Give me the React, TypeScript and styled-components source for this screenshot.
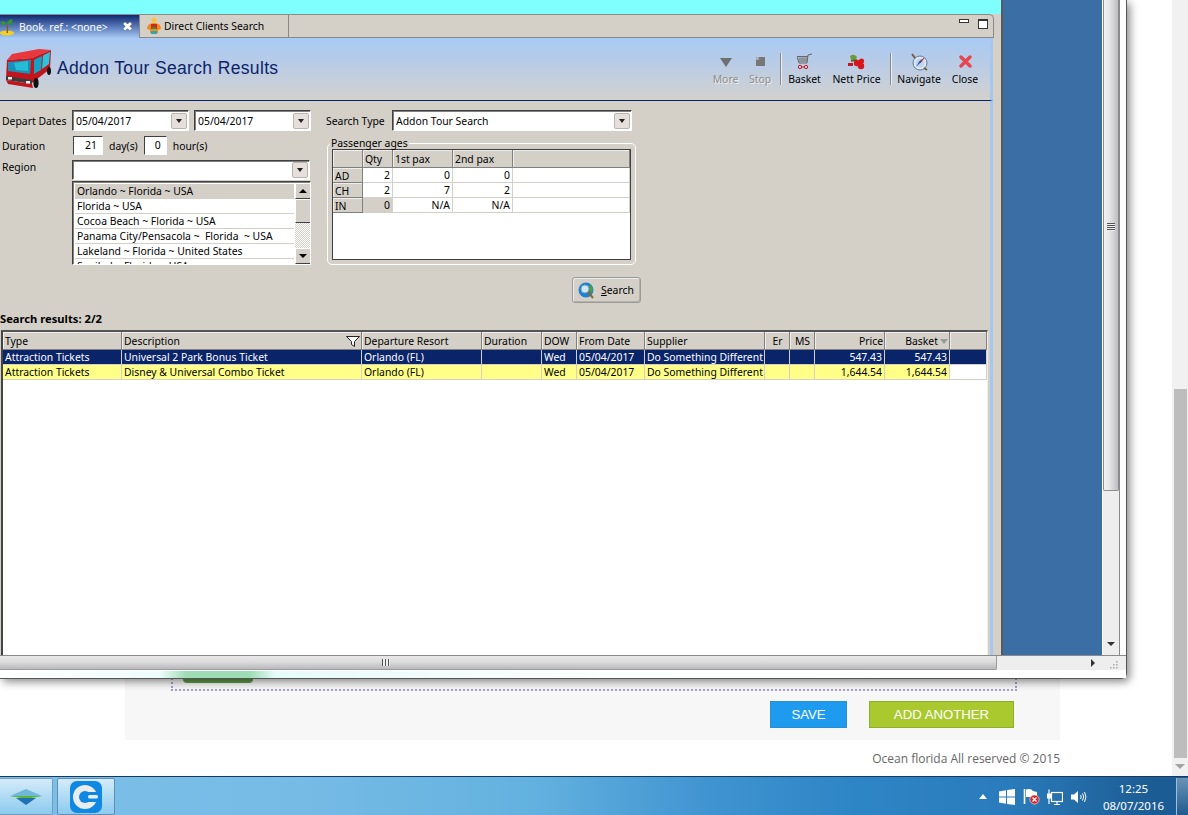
import React from "react";
import styled, { createGlobalStyle } from "styled-components";

const Global = createGlobalStyle`
  html, body { margin: 0; padding: 0; width: 1188px; height: 815px; overflow: hidden; background: #fff; }
  * { box-sizing: border-box; }
`;
const UI = `"Noto Sans", "DejaVu Sans", sans-serif`;
const FS = "10.4px";

const Desktop = styled.div`position: relative; width: 1188px; height: 815px; overflow: hidden; background: #fff; font-family: ${UI}; display: flex; flex-direction: column;`;
const PageArea = styled.div`display: flex; height: 776px;`;
const PageMain = styled.div`width: 1172px; display: flex; flex-direction: column;`;
const PagePanel = styled.div`margin-left: 125px; width: 935px; height: 740px; background: #f7f7f7; display: flex; flex-direction: column; justify-content: flex-end; padding-bottom: 12px;`;
const DottedBox = styled.div`margin-left: 46px; width: 846px; height: 60px; border: 2px dotted #a79fcb; border-top: none; display: flex; align-items: flex-end; padding: 0 0 6px 10px;`;
const GreenTab = styled.div`width: 70px; height: 20px; background: #5f9c48; border-radius: 0 0 4px 4px;`;
const ActionRow = styled.div`display: flex; justify-content: flex-end; gap: 22px; padding-right: 46px; margin-top: 10px;`;
const ActionButton = styled.button<{ $bg: string; $line: string; $w: number }>`
  width: ${p => p.$w}px; height: 27px; background: ${p => p.$bg}; border: 1px solid ${p => p.$line}; color: #fff;
  font: 13.2px "Liberation Sans", Arial, sans-serif; padding: 0;
`;
const Footer = styled.div`margin-top: 10px; width: 1060px; text-align: right; font: 12px "Open Sans", sans-serif; color: #666;`;
const PageScroll = styled.div`width: 16px; background: #f1f1f1; display: flex; flex-direction: column; align-items: center; padding-top: 389px; position: relative;`;
const PageThumb = styled.div`width: 13px; height: 369px; background: #bdbdbd; margin-left: 1px;`;
const PageArrow = styled.div`margin-top: 6px; width: 0; height: 0; border: 5px solid transparent; border-top: 5px solid #a3a3a3; border-bottom: none;`;

const Window = styled.div`
  position: absolute; left: 0; top: 0; width: 1127px; height: 679px; background: #fff;
  border-right: 1px solid #555; border-bottom: 1px solid #555; border-radius: 0 0 6px 0;
  box-shadow: 3px 3px 9px rgba(0,0,0,.45); display: flex; flex-direction: column;
`;
const WinMain = styled.div`display: flex; height: 655px;`;
const AppCol = styled.div`width: 1003px; display: flex; flex-direction: column; background: #d4d0c8; border-right: 2px solid #5a5a58; height: 100%;`;
const Cyan = styled.div`height: 14px; background: #80ffff;`;
const AppPanel = styled.div`flex: 1; width: 993px; display: flex; flex-direction: column; min-height: 0;`;
const TabBar = styled.div`height: 24px; display: flex; border-top: 1px solid #8a8a8a; border-right: 1px solid #8a8a8a; border-top-right-radius: 5px; width: 994px; position: relative;`;
const ActiveTab = styled.div`
  width: 139px; display: flex; align-items: center; gap: 4px; color: #fff; font-size: ${FS}; padding-right: 6px;
  background: linear-gradient(180deg, #0f2a70 0%, #5f7fbf 55%, #a6caf0 100%);
`;
const InactiveTab = styled.div`
  width: 150px; display: flex; align-items: center; gap: 2px; padding-left: 6px; font-size: ${FS}; color: #000;
  border-left: 1px solid #888; border-right: 1px solid #888; border-bottom: 1px solid #888;
`;
const TabRest = styled.div`flex: 1; border-bottom: 1px solid #888; display: flex; justify-content: flex-end; gap: 9px; padding: 4px 5px 0 0;`;
const TabClose = styled.span`margin-left: auto; font-weight: 700; font-size: 13px; line-height: 1; text-shadow: 0 0 1px #223;`;
const MinBtn = styled.div`width: 10px; height: 4px; border: 1px solid #333; background: #fff;`;
const MaxBtn = styled.div`width: 10px; height: 10px; border: 1px solid #333; border-top-width: 2px; background: #fff;`;
const Header = styled.div`
  height: 63px; display: flex; align-items: center; padding: 0 5px 0 4px; border-bottom: 1px solid #0a246a; border-right: 3px solid #a6c8f0;
  background: linear-gradient(180deg, #a9caf5 0%, #b6cbe8 35%, #c6cfdc 70%, #d2d1cc 100%);
`;
const Title = styled.h1`margin: 0 0 2px 5px; font: 400 17.5px "Liberation Sans", Arial, sans-serif; color: #0a246a; letter-spacing: .35px; flex: 1;`;
const Tool = styled.div<{ $w: number; $off?: boolean }>`
  width: ${p => p.$w}px; display: flex; flex-direction: column; align-items: center; gap: 1px; font-size: ${FS}; line-height: 14px;
  color: ${p => (p.$off ? "#8e8e8e" : "#000")}; ${p => p.$off && "text-shadow: 1px 1px 0 #eee;"}
`;
const ToolIcon = styled.div`height: 18px; display: flex; align-items: center; justify-content: center;`;
const ToolDivider = styled.div`width: 1px; height: 32px; background: #888; margin: 0 2px 0 3px; box-shadow: 1px 0 0 #eee;`;
const BodyWrap = styled.div`flex: 1; min-height: 0; display: flex; flex-direction: column; border-right: 3px solid #a6c8f0;`;
const Form = styled.div`height: 210px; display: flex; padding: 9px 0 0 2px; font-size: ${FS}; color: #000; line-height: 14px;`;
const LeftCol = styled.div`width: 308px; display: flex; flex-direction: column;`;
const RightCol = styled.div`margin-left: 16px; width: 310px; display: flex; flex-direction: column;`;
const FormRow = styled.div<{ $h: number; $mt?: number }>`display: flex; align-items: center; height: ${p => p.$h}px; margin-top: ${p => p.$mt ?? 0}px;`;
const Label = styled.div<{ $w: number; $top?: boolean }>`width: ${p => p.$w}px; flex: none; ${p => p.$top && "align-self: flex-start;"}`;
const Combo = styled.div<{ $w: number; $h?: number }>`
  width: ${p => p.$w}px; height: ${p => p.$h ?? 21}px; flex: none; background: #fff; display: flex; align-items: center; justify-content: space-between;
  border: 1px solid; border-color: #404040 #fff #fff #404040; box-shadow: inset 1px 1px 0 #808080; padding: 0 1px 0 3px;
`;
const DropBtn = styled.div`
  width: 16px; height: 16px; background: #e6dfdb; border: 1px solid #b9b4ae; border-radius: 2px; display: flex; align-items: center; justify-content: center;
  &::after { content: ""; border: 3px solid transparent; border-top: 4px solid #222; border-bottom: none; }
`;
const NumBox = styled.div<{ $w: number }>`
  width: ${p => p.$w}px; height: 19px; flex: none; background: #fff; text-align: right; padding: 1px 5px 0 0; margin-right: 6px;
  border: 1px solid; border-color: #404040 #fff #fff #404040;
`;
const Spacer = styled.span<{ $w: number }>`width: ${p => p.$w}px; flex: none;`;
const ListBox = styled.div`
  margin: 1px 0 0 70px; width: 239px; height: 84px; background: #fff; display: flex; overflow: hidden;
  border: 1px solid; border-color: #404040 #fff #fff #404040; box-shadow: inset 1px 1px 0 #808080; padding: 2px 0 0 2px;
`;
const ListItems = styled.div`width: 219px; flex: none;`;
const ListItem = styled.div<{ $on?: boolean }>`height: 15px; line-height: 14px; padding-left: 2px; white-space: pre; border-bottom: 1px solid #d4d0c8; background: ${p => (p.$on ? "#d4d0c8" : "#fff")};`;
const ListScroll = styled.div`
  flex: 1; margin-top: -1px; display: flex; flex-direction: column; margin-left: 1px;
  background: repeating-conic-gradient(#d4d0c8 0 25%, #fff 0 50%) 0 0 / 2px 2px;
`;
const ListBtn = styled.div<{ $up?: boolean; $grow?: boolean }>`
  width: 16px; height: ${p => (p.$grow ? 24 : 16)}px; background: #d4d0c8; border: 1px solid; border-color: #fff #404040 #404040 #fff;
  display: flex; align-items: center; justify-content: center; flex: none;
  ${p => (p.$grow ? "" : `&::after { content: ""; border: 4px solid transparent; ${p.$up ? "border-bottom: 4px solid #000; border-top: none;" : "border-top: 4px solid #000; border-bottom: none;"} }`)}
`;
const ListGap = styled.div`flex: 1;`;
const Group = styled.fieldset`margin: 6px 0 0 1px; width: 309px; padding: 0 4px 4px; border: 1px solid #fff; border-radius: 5px;`;
const Legend = styled.legend`padding: 0 1px; margin-left: -2px; line-height: 12px; font-size: ${FS};`;
const PaxTable = styled.div`
  height: 111px; border: 1px solid #404040; background: #fff; display: grid;
  grid-template-columns: 30px 30px 60px 60px 1fr; grid-auto-rows: 15px; grid-template-rows: 18px;
`;
const PaxHead = styled.div`background: #d4d0c8; padding: 2px 0 0 2px; box-shadow: inset -1px -1px 0 #808080, inset 1px 1px 0 #eee;`;
const PaxRowHead = styled(PaxHead)`padding: 1px 0 0 2px;`;
const PaxCell = styled.div<{ $off?: boolean }>`text-align: right; padding-right: 2px; border-right: 1px solid #d4d0c8; border-bottom: 1px solid #d4d0c8; background: ${p => (p.$off ? "#d4d0c8" : "#fff")};`;
const SearchBtn = styled.button`
  margin: 12px 0 0 246px; width: 69px; height: 26px; background: #d4d0c8; border: 1px solid #9a9a96; border-radius: 3px; box-shadow: inset 1px 1px 0 #eee, inset -1px -1px 0 #b5b2aa;
  display: flex; align-items: center; gap: 6px; padding: 0 0 0 5px; font: ${FS} ${UI}; color: #000;
  u { text-decoration: underline; }
`;
const Status = styled.div`height: 16px; font-weight: 700; font-size: 11.2px; line-height: 16px; color: #000;`;
const Results = styled.div`margin: 3px 0 0 1px; width: 987px; flex: 1; min-height: 0; background: #fff; border-top: 2px solid #555; border-left: 2px solid #444; border-right: 1px solid #eee; font-size: ${FS}; line-height: 14px;`;
const ResCols = "119px 240px 120px 60px 35px 68px 120px 25px 25px 70px 65px 1fr";
const ResHead = styled.div`display: grid; grid-template-columns: ${ResCols}; height: 18px;`;
const HeadCell = styled.div<{ $align?: string }>`
  background: #d4d0c8; padding: 0 2px; text-align: ${p => p.$align ?? "left"}; display: flex; align-items: center; gap: 2px;
  justify-content: ${p => (p.$align === "right" ? "flex-end" : p.$align === "center" ? "center" : "space-between")};
  box-shadow: inset -1px -1px 0 #808080, inset 1px 1px 0 #eee;
`;
const ResRow = styled.div<{ $sel?: boolean }>`
  display: grid; grid-template-columns: ${ResCols}; height: 15px;
  color: ${p => (p.$sel ? "#fff" : "#000")};
`;
const ResCell = styled.div<{ $right?: boolean; $bg: string }>`
  background: ${p => p.$bg}; padding: 0 2px; white-space: nowrap; text-align: ${p => (p.$right ? "right" : "left")};
  border-right: 1px solid #d4d0c8; border-bottom: 1px solid #d4d0c8;
`;
const BluePane = styled.div`width: 100px; background: #3a6ea5; border-right: 1px solid #fff;`;
const VScroll = styled.div`width: 16px; background: #eee; display: flex; flex-direction: column; align-items: center;`;
const VThumb = styled.div`
  width: 100%; height: 491px; border: 1px solid #8c8c8c; border-top: none; border-radius: 0 0 2px 2px; position: relative; flex: none;
  background: linear-gradient(90deg, #f2f2f2 0%, #e6e6e6 40%, #bcbcc2 100%);
`;
const VGrip = styled.div`position: absolute; left: 3px; top: 223px; width: 8px; height: 8px; background: repeating-linear-gradient(180deg, #555 0 1px, #eee 1px 2px);`;
const VArrow = styled.div`margin-top: 151px; border: 4px solid transparent; border-top: 4px solid #333; border-bottom: none; margin-left: -1px;`;
const WinRightFrame = styled.div`flex: 1; border-left: 1px solid #8a8a8a; background: #fff;`;
const HBar = styled.div`height: 16px; display: flex; background: #eee; border-top: 1px solid #8a8a8a; border-bottom: 1px solid #fff;`;
const HThumb = styled.div`
  width: 997px; height: 14px; border-right: 1px solid #9c9c9c; border-bottom: 1px solid #9c9c9c; position: relative; flex: none; border-radius: 0 0 2px 0;
  background: linear-gradient(180deg, #e9e9e9 0%, #dcdcdc 45%, #b9b9be 100%);
`;
const HGrip = styled.div`position: absolute; left: 382px; top: 3px; width: 8px; height: 7px; background: repeating-linear-gradient(90deg, #555 0 1px, #eee 1px 3px);`;
const HArrow = styled.div`margin: 3px 0 0 94px; height: 0; width: 0; border: 4px solid transparent; border-left: 4px solid #333; border-right: none;`;
const Corner = styled.div`margin: 5px 0 0 15px; line-height: 0;`;
const BottomFrame = styled.div`
  flex: 1; background: linear-gradient(90deg, #fff 0, #eefcfc 160px, #9fdcb5 186px, #9fdcb5 250px, #e6fcfb 275px, #edfbfa 360px, #fbfffe 600px, #fff 1000px);
`;

const Taskbar = styled.div`
  height: 39px; display: flex; border-top: 1px solid #16395e; padding-top: 1px;
  background: linear-gradient(90deg, #7cc0e8 0%, #76bbe6 25%, #63b1df 45%, #3f93d0 60%, #2e85c5 72%, #2a7bbb 85%, #1c5c94 97%, #1c5c94 100%);
`;
const TaskStart = styled.div`width: 53px; border: 1px solid #6d9ec3; border-left: none; border-radius: 0 2px 2px 0; background: linear-gradient(180deg, #d4ebf9 0%, #8ccbef 100%); display: flex; align-items: center; justify-content: center; margin-right: 4px;`;
const TaskApp = styled.div`width: 58px; border: 1px solid #5f8fb5; border-radius: 2px; background: linear-gradient(180deg, #d4ebf9 0%, #8ccbef 100%); display: flex; align-items: center; justify-content: center;`;
const Tray = styled.div`margin-left: auto; display: flex; align-items: center; height: 100%; color: #fff;`;
const TrayIcon = styled.div`width: 24px; display: flex; justify-content: center; align-items: center;`;
const Clock = styled.div`width: 85px; text-align: center; font-size: 11.5px; line-height: 17px;`;
const ShowDesk = styled.div`width: 12px; height: 100%; margin-top: 0; background: linear-gradient(180deg, #6b93b5, #1f5a8f); border-left: 1px solid #9fc0d8;`;

const Bus = () => (
  <svg width="48" height="40" viewBox="0 0 48 40">
    <path d="M3 11 L8 5 L35 0 L47 1 L28 9Z" fill="#e8383e" />
    <path d="M3 11 L28 9 L28 34 L2 29Z" fill="#c4151c" />
    <path d="M4 13 L27 11 L26 25 L4 22Z" fill="#1b8fb8" />
    <path d="M10 14 L24 12 L24 22 L12 21Z" fill="#27bcd6" />
    <path d="M28 9 L47 1 L46 20 L28 34Z" fill="#c4151c" />
    <path d="M30 11 L38 7 L37 21 L30 25Z" fill="#13a3c4" />
    <path d="M39 6.5 L46 3 L45 15 L38 20Z" fill="#2ac4dc" />
    <path d="M2 27 L28 31 L28 35 L2 31Z" fill="#3c3c3c" />
    <path d="M2 31 L28 35 L29 39 L4 35Z" fill="#c4151c" />
    <rect x="4" y="28" width="4" height="2.5" fill="#eee" />
    <rect x="22" y="32" width="4" height="2.5" fill="#eee" />
    <ellipse cx="32" cy="34" rx="2.6" ry="5" fill="#111" />
    <ellipse cx="45" cy="22" rx="2" ry="4" fill="#111" />
  </svg>
);
const Palm = () => (
  <svg width="15" height="18" viewBox="0 0 15 18">
    <ellipse cx="7" cy="15" rx="7" ry="2.4" fill="#f6d21e" />
    <path d="M7 6 Q9 10 8 15 L6.5 15 Q7.5 10 6 6Z" fill="#8a5a20" />
    <path d="M7 6 Q2 1 0 5 Q4 4 1 9 Q5 5 7 6 Q8 1 13 1 Q10 3 14 6 Q10 4 8 7 Q12 7 13 10 Q9 7 7 6Z" fill="#2f9c2a" />
  </svg>
);
const Man = () => (
  <svg width="16" height="18" viewBox="0 0 16 18">
    <circle cx="8" cy="3" r="2.6" fill="#f6c445" />
    <path d="M1 12 Q1 6 8 6 Q15 6 15 12 L12 13 L12 16 L4 16 L4 13Z" fill="#f08a12" />
    <rect x="5" y="7" width="6" height="5" fill="#d9231c" />
    <rect x="6" y="10" width="4" height="2" fill="#1f9c3a" />
    <rect x="5" y="14" width="6" height="3" fill="#2aa8b8" />
  </svg>
);
const Triangle = () => <svg width="12" height="10" viewBox="0 0 12 10"><path d="M0 1H12L6 10Z" fill="#6f6f6f" /></svg>;
const Square = () => <svg width="9" height="9" viewBox="0 0 9 9"><rect width="9" height="9" fill="#777" /><rect width="3" height="3" fill="#aaa" /></svg>;
const Cart = () => (
  <svg width="16" height="17" viewBox="0 0 16 17" fill="none">
    <path d="M15 1 L11 2 L10 10 H2 L0 3.5 H11" stroke="#666" />
    <path d="M3 4V9M5 4V9M7 4V9M9 4V9M1 6H10M1.5 8H10" stroke="#777" strokeWidth=".8" />
    <circle cx="3" cy="14" r="1.7" stroke="#d5141b" />
    <circle cx="9" cy="14" r="1.7" stroke="#d5141b" />
    <path d="M4.7 14H7.3" stroke="#d5141b" />
  </svg>
);
const Berries = () => (
  <svg width="17" height="16" viewBox="0 0 17 16">
    <path d="M2 2 Q6 -1 9 3 L7 7 L3 6Z" fill="#6f9a3a" />
    <path d="M3 7 L9 6" stroke="#3e6a20" strokeWidth="1.5" />
    <circle cx="9" cy="9" r="3.2" fill="#d8141c" />
    <circle cx="13.5" cy="7" r="2.6" fill="#d8141c" />
    <circle cx="13" cy="12" r="3.2" fill="#d8141c" />
    <rect x="0" y="9" width="5" height="3" fill="#c8141c" />
  </svg>
);
const Compass = () => (
  <svg width="17" height="18" viewBox="0 0 17 18">
    <circle cx="9" cy="10" r="7" fill="#dfe8f2" stroke="#5d7a99" />
    <circle cx="9" cy="10" r="4.5" fill="#bcd6ee" />
    <path d="M5 14 L10 9 L13 5 L8.5 8Z" fill="#1a4fb8" />
    <path d="M9 10 L13 5" stroke="#d8141c" />
    <path d="M1 1 L4 5" stroke="#7a5a3a" strokeWidth="2" />
    <path d="M13 15 L16 17" stroke="#7a5a3a" strokeWidth="2" />
  </svg>
);
const RedX = () => (
  <svg width="13" height="13" viewBox="0 0 13 13"><path d="M2 2 L11 11 M11 2 L2 11" stroke="#e8464e" strokeWidth="3.4" strokeLinecap="round" /></svg>
);
const Globe = () => (
  <svg width="17" height="18" viewBox="0 0 17 18">
    <circle cx="8" cy="9" r="7.5" fill="#1f7fd6" />
    <path d="M12 3 Q16 7 14 12 L11 9Z" fill="#4fa03a" />
    <circle cx="7" cy="8" r="4" fill="#cfe7f2" stroke="#7aa6b8" />
    <path d="M10 11 L15 17" stroke="#8a6a2a" strokeWidth="2" />
  </svg>
);
const Funnel = () => (
  <svg width="14" height="11" viewBox="0 0 14 11" fill="#fff"><path d="M.5.5H13.5L8.5 5.5V10.5L5.5 8.5V5.5Z" stroke="#222" /></svg>
);
const SortMark = () => <svg width="8" height="5" viewBox="0 0 8 5"><path d="M0 0H8L4 5Z" fill="#9a9a9a" /></svg>;
const ResizeGrip = () => (
  <svg width="8" height="8" viewBox="0 0 8 8" fill="#aaa">
    <rect x="6" y="0" width="1.5" height="1.5" /><rect x="3" y="3" width="1.5" height="1.5" /><rect x="6" y="3" width="1.5" height="1.5" />
    <rect x="0" y="6" width="1.5" height="1.5" /><rect x="3" y="6" width="1.5" height="1.5" /><rect x="6" y="6" width="1.5" height="1.5" />
  </svg>
);
const StartLogo = () => (
  <svg width="32" height="16" viewBox="0 0 32 16">
    <path d="M0 7 L16 0 L32 7 L16 8Z" fill="#6fb8d6" />
    <path d="M0 7 L32 7 L16 10Z" fill="#5cb534" />
    <path d="M6 9 L26 9 L16 16Z" fill="#1f72b5" />
  </svg>
);
const GLogo = () => (
  <svg width="32" height="32" viewBox="0 0 32 32">
    <rect width="32" height="32" rx="7" fill="#0f88e3" />
    <circle cx="15" cy="16" r="12" fill="#e9edf0" />
    <circle cx="15" cy="16" r="6" fill="#0f88e3" />
    <rect x="16" y="11" width="14" height="10" rx="3" fill="#0f88e3" />
    <rect x="18" y="14" width="10" height="3.5" rx="1.5" fill="#e9edf0" />
  </svg>
);
const WinLogo = () => (
  <svg width="16" height="16" viewBox="0 0 16 16" fill="#fff"><path d="M0 2.5 L7 1.2V7.4H0Z M8 1 L16 0V7.4H8Z M0 8.5H7V14.8L0 13.5Z M8 8.5H16V16L8 15Z" /></svg>
);
const FlagErr = () => (
  <svg width="17" height="17" viewBox="0 0 17 17">
    <path d="M1.5 1V16" stroke="#fff" strokeWidth="1.6" />
    <path d="M3 1.5 Q8 0 10 3 L14 4 V9 H3Z" fill="#fff" />
    <circle cx="11.5" cy="11.5" r="4.6" fill="#d8232a" stroke="#fff" strokeWidth=".6" />
    <path d="M9.5 9.5 L13.5 13.5 M13.5 9.5 L9.5 13.5" stroke="#fff" strokeWidth="1.3" />
  </svg>
);
const NetIcon = () => (
  <svg width="16" height="16" viewBox="0 0 16 16" fill="none" stroke="#fff">
    <rect x="4.5" y="3.5" width="11" height="9" strokeWidth="1.2" />
    <path d="M7 15.5H13M10 13V15" strokeWidth="1.2" />
    <path d="M2 .5V5M0 5H4V9H0ZM2 9V15" strokeWidth="1.2" fill="#fff" />
  </svg>
);
const Speaker = () => (
  <svg width="16" height="16" viewBox="0 0 16 16" fill="none">
    <path d="M0 5.5H3L7 2V14L3 10.5H0Z" fill="#fff" />
    <path d="M9.5 6Q11 8 9.5 10M11.5 4.5Q14 8 11.5 11.5M13.5 3Q16.5 8 13.5 13" stroke="#fff" strokeWidth="1" />
  </svg>
);

const regions = ["Orlando ~ Florida ~ USA", "Florida ~ USA", "Cocoa Beach ~ Florida ~ USA", "Panama City/Pensacola ~  Florida  ~ USA", "Lakeland ~ Florida ~ United States", "Sanibel ~ Florida ~ USA"];
const resultCols = ["Type", "Description", "Departure Resort", "Duration", "DOW", "From Date", "Supplier", "Er", "MS", "Price", "Basket", ""];
const rows = [
  { t: "Attraction Tickets", d: "Universal 2 Park Bonus Ticket", p: "547.43", sel: true },
  { t: "Attraction Tickets", d: "Disney & Universal Combo Ticket", p: "1,644.54", sel: false },
];
const pax = [
  ["AD", "2", "0", "0"],
  ["CH", "2", "7", "2"],
  ["IN", "0", "N/A", "N/A"],
];

export default function App() {
  return (
    <Desktop>
      <Global />
      <PageArea>
        <PageMain>
          <PagePanel>
            <DottedBox><GreenTab /></DottedBox>
            <ActionRow>
              <ActionButton $bg="#1e9bef" $line="#2a8ed0" $w={77}>SAVE</ActionButton>
              <ActionButton $bg="#a9c92f" $line="#8fae2c" $w={145}>ADD ANOTHER</ActionButton>
            </ActionRow>
          </PagePanel>
          <Footer>Ocean florida All reserved © 2015</Footer>
        </PageMain>
        <PageScroll>
          <PageThumb />
          <PageArrow />
        </PageScroll>
      </PageArea>

      <Window>
        <WinMain>
          <AppCol>
            <Cyan />
            <AppPanel>
              <TabBar>
                <ActiveTab><Palm />Book. ref.: &lt;none&gt;<TabClose>✖</TabClose></ActiveTab>
                <InactiveTab><Man />Direct Clients Search</InactiveTab>
                <TabRest><MinBtn /><MaxBtn /></TabRest>
              </TabBar>
              <Header>
                <Bus />
                <Title>Addon Tour Search Results</Title>
                <Tool $w={35} $off><ToolIcon><Triangle /></ToolIcon>More</Tool>
                <Tool $w={34} $off><ToolIcon><Square /></ToolIcon>Stop</Tool>
                <ToolDivider />
                <Tool $w={43}><ToolIcon><Cart /></ToolIcon>Basket</Tool>
                <Tool $w={61}><ToolIcon><Berries /></ToolIcon>Nett Price</Tool>
                <ToolDivider />
                <Tool $w={52}><ToolIcon><Compass /></ToolIcon>Navigate</Tool>
                <Tool $w={40}><ToolIcon><RedX /></ToolIcon>Close</Tool>
              </Header>
              <BodyWrap>
                <Form>
                  <LeftCol>
                    <FormRow $h={21}>
                      <Label $w={70}>Depart Dates</Label>
                      <Combo $w={117}>05/04/2017<DropBtn /></Combo>
                      <Spacer $w={5} />
                      <Combo $w={117}>05/04/2017<DropBtn /></Combo>
                    </FormRow>
                    <FormRow $h={19} $mt={5}>
                      <Label $w={71}>Duration</Label>
                      <NumBox $w={30}>21</NumBox>day(s)<Spacer $w={6} />
                      <NumBox $w={23}>0</NumBox>hour(s)
                    </FormRow>
                    <FormRow $h={20} $mt={5}>
                      <Label $w={70} $top>Region</Label>
                      <Combo $w={238} $h={20}>&nbsp;<DropBtn /></Combo>
                    </FormRow>
                    <ListBox>
                      <ListItems>
                        {regions.map((r, i) => <ListItem key={r} $on={i === 0}>{r}</ListItem>)}
                      </ListItems>
                      <ListScroll>
                        <ListBtn $up />
                        <ListBtn $grow />
                        <ListGap />
                        <ListBtn />
                      </ListScroll>
                    </ListBox>
                  </LeftCol>
                  <RightCol>
                    <FormRow $h={21}>
                      <Label $w={66}>Search Type</Label>
                      <Combo $w={240}>Addon Tour Search<DropBtn /></Combo>
                    </FormRow>
                    <Group>
                      <Legend>Passenger ages</Legend>
                      <PaxTable>
                        <PaxHead />
                        <PaxHead>Qty</PaxHead>
                        <PaxHead>1st pax</PaxHead>
                        <PaxHead>2nd pax</PaxHead>
                        <PaxHead />
                        {pax.map(r => (
                          <React.Fragment key={r[0]}>
                            <PaxRowHead>{r[0]}</PaxRowHead>
                            <PaxCell $off={r[0] === "IN"}>{r[1]}</PaxCell>
                            <PaxCell>{r[2]}</PaxCell>
                            <PaxCell>{r[3]}</PaxCell>
                            <PaxCell />
                          </React.Fragment>
                        ))}
                      </PaxTable>
                    </Group>
                    <SearchBtn><Globe /><span><u>S</u>earch</span></SearchBtn>
                  </RightCol>
                </Form>
                <Status>Search results: 2/2</Status>
                <Results>
                  <ResHead>
                    {resultCols.map((c, i) => (
                      <HeadCell key={i} $align={i === 9 || i === 10 ? "right" : i === 7 || i === 8 ? "center" : "left"}>
                        {c}{i === 1 && <Funnel />}{i === 10 && <SortMark />}
                      </HeadCell>
                    ))}
                  </ResHead>
                  {rows.map(r => {
                    const bg = r.sel ? "#0a246a" : "#ffff88";
                    const vals = [r.t, r.d, "Orlando (FL)", "", "Wed", "05/04/2017", "Do Something Different", "", "", r.p, r.p];
                    return (
                      <ResRow key={r.d} $sel={r.sel}>
                        {vals.map((v, i) => <ResCell key={i} $bg={bg} $right={i > 8}>{v}</ResCell>)}
                        <ResCell $bg={r.sel ? bg : "#fff"} />
                      </ResRow>
                    );
                  })}
                </Results>
              </BodyWrap>
            </AppPanel>
          </AppCol>
          <BluePane />
          <VScroll>
            <VThumb><VGrip /></VThumb>
            <VArrow />
          </VScroll>
          <WinRightFrame />
        </WinMain>
        <HBar>
          <HThumb><HGrip /></HThumb>
          <HArrow />
          <Corner><ResizeGrip /></Corner>
        </HBar>
        <BottomFrame />
      </Window>

      <Taskbar>
        <TaskStart><StartLogo /></TaskStart>
        <TaskApp><GLogo /></TaskApp>
        <Tray>
          <TrayIcon><svg width="8" height="5" viewBox="0 0 8 5"><path d="M0 5L4 0L8 5Z" fill="#fff" /></svg></TrayIcon>
          <TrayIcon><WinLogo /></TrayIcon>
          <TrayIcon><FlagErr /></TrayIcon>
          <TrayIcon><NetIcon /></TrayIcon>
          <TrayIcon><Speaker /></TrayIcon>
          <Clock>12:25<br />08/07/2016</Clock>
          <ShowDesk />
        </Tray>
      </Taskbar>
    </Desktop>
  );
}
